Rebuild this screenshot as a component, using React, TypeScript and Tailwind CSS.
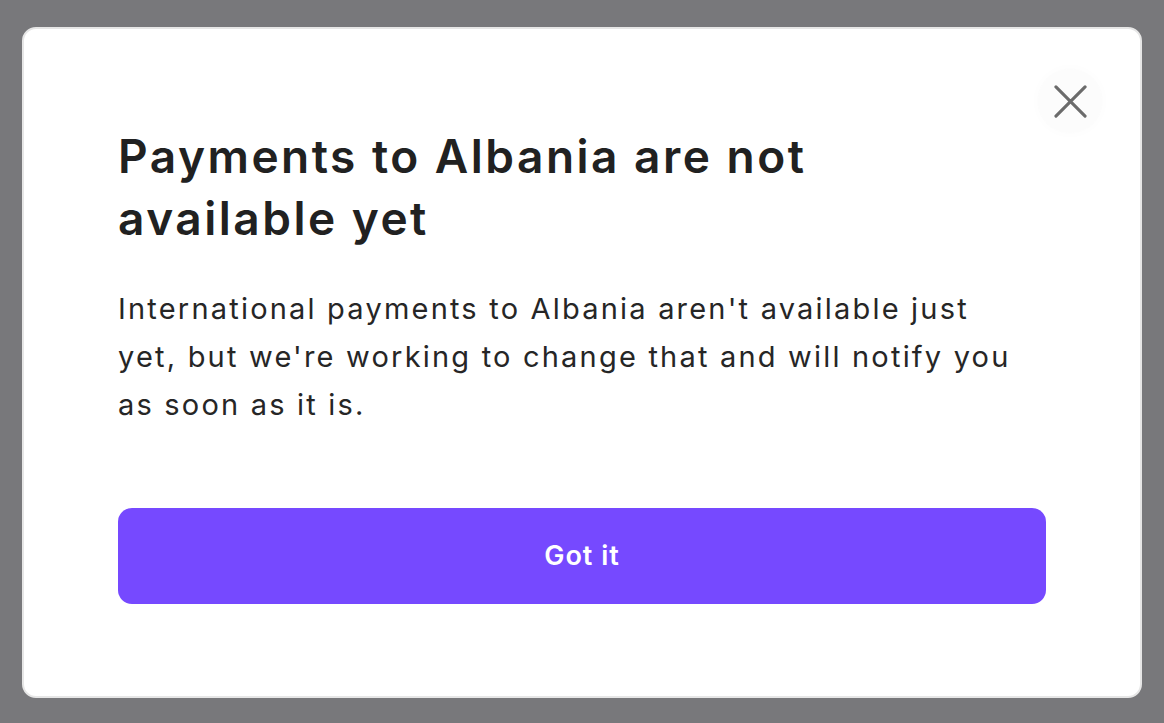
import React from "react";

const App: React.FC = () => {
  return (
    <div
      className="h-[723px] w-full bg-[#78787b] pl-[22px] pr-[22px] pt-[27px] pb-[25px]"
      style={{ fontFamily: "Inter, 'Noto Sans', sans-serif" }}
    >
      {/* Modal */}
      <div className="relative h-full rounded-[14px] border-2 border-[#e6e6e6] bg-white px-[94px] pt-[96px]">
        <button className="absolute right-[38px] top-[40px] flex h-[64px] w-[64px] items-center justify-center rounded-full bg-[#fcfcfc] shadow-[0_0_12px_rgba(0,0,0,0.02)]">
          <svg width="33" height="33" viewBox="0 0 34 34" fill="none">
            <path
              d="M2 2L32 32M32 2L2 32"
              stroke="#6b6b6b"
              strokeWidth="3.2"
              strokeLinecap="round"
            />
          </svg>
        </button>

        <h2 className="text-[46px] font-semibold leading-[62px] tracking-[2.5px] text-[#212121]">
          Payments to Albania are not
          <br />
          available yet
        </h2>

        <p className="mt-[36px] text-[29px] leading-[48px] tracking-[2.2px] text-[#262626]">
          International payments to Albania aren't available just
          <br />
          yet, but we're working to change that and will notify you
          <br />
          as soon as it is.
        </p>

        <button className="mt-[79px] flex h-[96px] w-full items-center justify-center rounded-[14px] bg-[#7649ff] text-[27px] font-semibold tracking-[1px] text-white">
          Got it
        </button>
      </div>
    </div>
  );
};

export default App;
